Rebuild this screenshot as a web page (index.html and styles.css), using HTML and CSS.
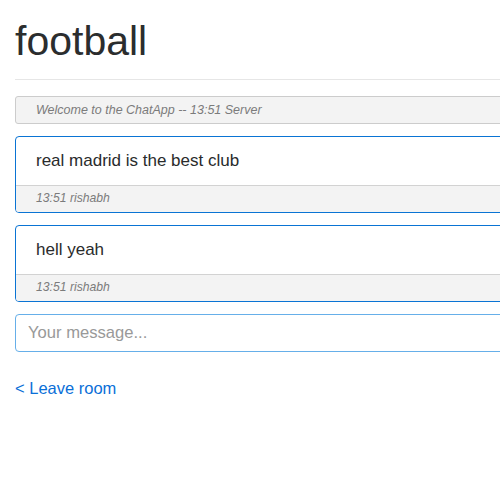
FILE: index.html
```html
<!DOCTYPE html>
<html lang="en">
<head>
<meta charset="utf-8">
<title>football</title>
<link rel="stylesheet" href="styles.css">
</head>
<body>
<div class="room">
  <h1 class="room-title">football</h1>
  <hr class="divider">
  <div class="server-msg">Welcome to the ChatApp -- 13:51 Server</div>
  <div class="msg-card">
    <div class="msg-body">real madrid is the best club</div>
    <div class="msg-footer">13:51 rishabh</div>
  </div>
  <div class="msg-card">
    <div class="msg-body">hell yeah</div>
    <div class="msg-footer">13:51 rishabh</div>
  </div>
  <form class="msg-form" onsubmit="return false">
    <input class="msg-input" type="text" placeholder="Your message...">
  </form>
  <p class="leave"><a class="leave-link" href="#">&lt; Leave room</a></p>
</div>
</body>
</html>
```

FILE: styles.css
```css
html, body {
  margin: 0;
  padding: 0;
  overflow: hidden;
  background: #fff;
}
body {
  font-family: "Liberation Sans", Arial, sans-serif;
  color: #292b2c;
}
.room {
  padding-left: 15px;
  margin-right: -8px;
}
.room-title {
  font-size: 41px;
  font-weight: 400;
  line-height: 45px;
  margin: 19px 0 15px;
  color: #2b2d2e;
}
.divider {
  border: 0;
  border-top: 1px solid #e6e6e6;
  margin: 0 0 16px;
  height: 0;
}
.server-msg {
  border: 1px solid #cccccc;
  border-radius: 3px;
  background: #f3f3f3;
  font-style: italic;
  font-size: 12.5px;
  line-height: 26px;
  padding: 0 20px;
  color: #7b7b7b;
  margin-bottom: 12px;
}
.msg-card {
  border: 1px solid #0a74d4;
  border-radius: 4px;
  overflow: hidden;
  margin-bottom: 12px;
}
.msg-body {
  padding: 12px 20px;
  font-size: 17px;
  line-height: 24px;
  color: #292b2c;
}
.msg-footer {
  border-top: 1px solid #d2d2d2;
  background: #f3f3f3;
  padding: 3px 20px 5px;
  font-size: 12.2px;
  line-height: 18px;
  font-style: italic;
  color: #7b7b7b;
}
.msg-form {
  margin: 0;
}
.msg-input {
  display: block;
  box-sizing: border-box;
  width: 100%;
  height: 38px;
  border: 1px solid #66afe9;
  border-radius: 4px;
  padding: 6px 12px;
  font-family: "Liberation Sans", Arial, sans-serif;
  font-size: 16.6px;
  line-height: 24px;
  color: #292b2c;
  outline: none;
  margin: 0;
}
.msg-input::placeholder {
  color: #999;
  opacity: 1;
}
.leave {
  margin: 24px 0 0;
  font-size: 16.5px;
  line-height: 24px;
}
.leave-link {
  color: #0a6fd8;
  text-decoration: none;
}
```
